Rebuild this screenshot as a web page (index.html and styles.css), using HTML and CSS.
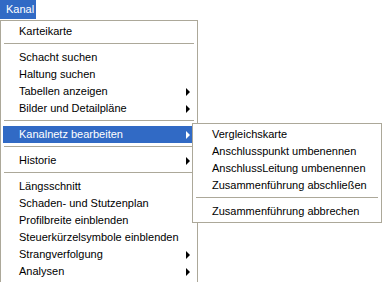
FILE: index.html
```html
<!DOCTYPE html>
<html lang="de">
<head>
    <meta charset="UTF-8">
    <title>Kanal</title>
    <link rel="stylesheet" href="styles.css">
</head>
<body>
    <div class="menubar">
        <span class="menu-title">Kanal</span>
    </div>

    <div class="menu">
        <div class="item">Karteikarte</div>
        <div class="sep"></div>
        <div class="item">Schacht suchen</div>
        <div class="item">Haltung suchen</div>
        <div class="item">Tabellen anzeigen <span class="arrow"></span></div>
        <div class="item">Bilder und Detailpläne <span class="arrow"></span></div>
        <div class="sep"></div>
        <div class="item active">Kanalnetz bearbeiten <span class="arrow"></span>
            <!-- Untermenü -->
            <div class="menu submenu">
                <div class="item">Vergleichskarte</div>
                <div class="item">Anschlusspunkt umbenennen</div>
                <div class="item">AnschlussLeitung umbenennen</div>
                <div class="item">Zusammenführung abschließen</div>
                <div class="sep"></div>
                <div class="item">Zusammenführung abbrechen</div>
            </div>
        </div>
        <div class="sep"></div>
        <div class="item">Historie <span class="arrow"></span></div>
        <div class="sep"></div>
        <div class="item">Längsschnitt</div>
        <div class="item">Schaden- und Stutzenplan</div>
        <div class="item">Profilbreite einblenden</div>
        <div class="item">Steuerkürzelsymbole einblenden</div>
        <div class="item">Strangverfolgung <span class="arrow"></span></div>
        <div class="item">Analysen <span class="arrow"></span></div>
    </div>
</body>
</html>
```

FILE: styles.css
```css
body {
    margin: 0;
    background: #fff;
    font-family: "Liberation Sans", Arial, sans-serif;
    font-size: 11px;
    color: #000;
}
.menubar {
    height: 20px;
}
.menu-title {
    display: inline-block;
    width: 36px;
    height: 19px;
    line-height: 19px;
    padding-left: 6px;
    box-sizing: border-box;
    background-color: #316ac5;
    color: #fff;
}
.menu {
    width: 198px;
    padding: 2px;
    border: 1px solid #aca899;
    background: #fff;
    box-sizing: border-box;
}
.item {
    position: relative;
    display: flex;
    justify-content: space-between;
    align-items: center;
    height: 17px;
    line-height: 17px;
    padding: 0 5px 0 16px;
    white-space: nowrap;
}
.item.active {
    background-color: #316ac5;
    color: #fff;
}
.sep {
    height: 1px;
    margin: 3px 1px 5px;
    background-color: #aca899;
}
.arrow {
    width: 0;
    height: 0;
    border-left: 4px solid #000;
    border-top: 4px solid transparent;
    border-bottom: 4px solid transparent;
}
.active > .arrow {
    border-left-color: #fff;
}
.submenu {
    position: absolute;
    top: -3px;
    left: 189px;
    width: 190px;
    color: #000;
}
.submenu .item {
    padding-left: 17px;
}
```
